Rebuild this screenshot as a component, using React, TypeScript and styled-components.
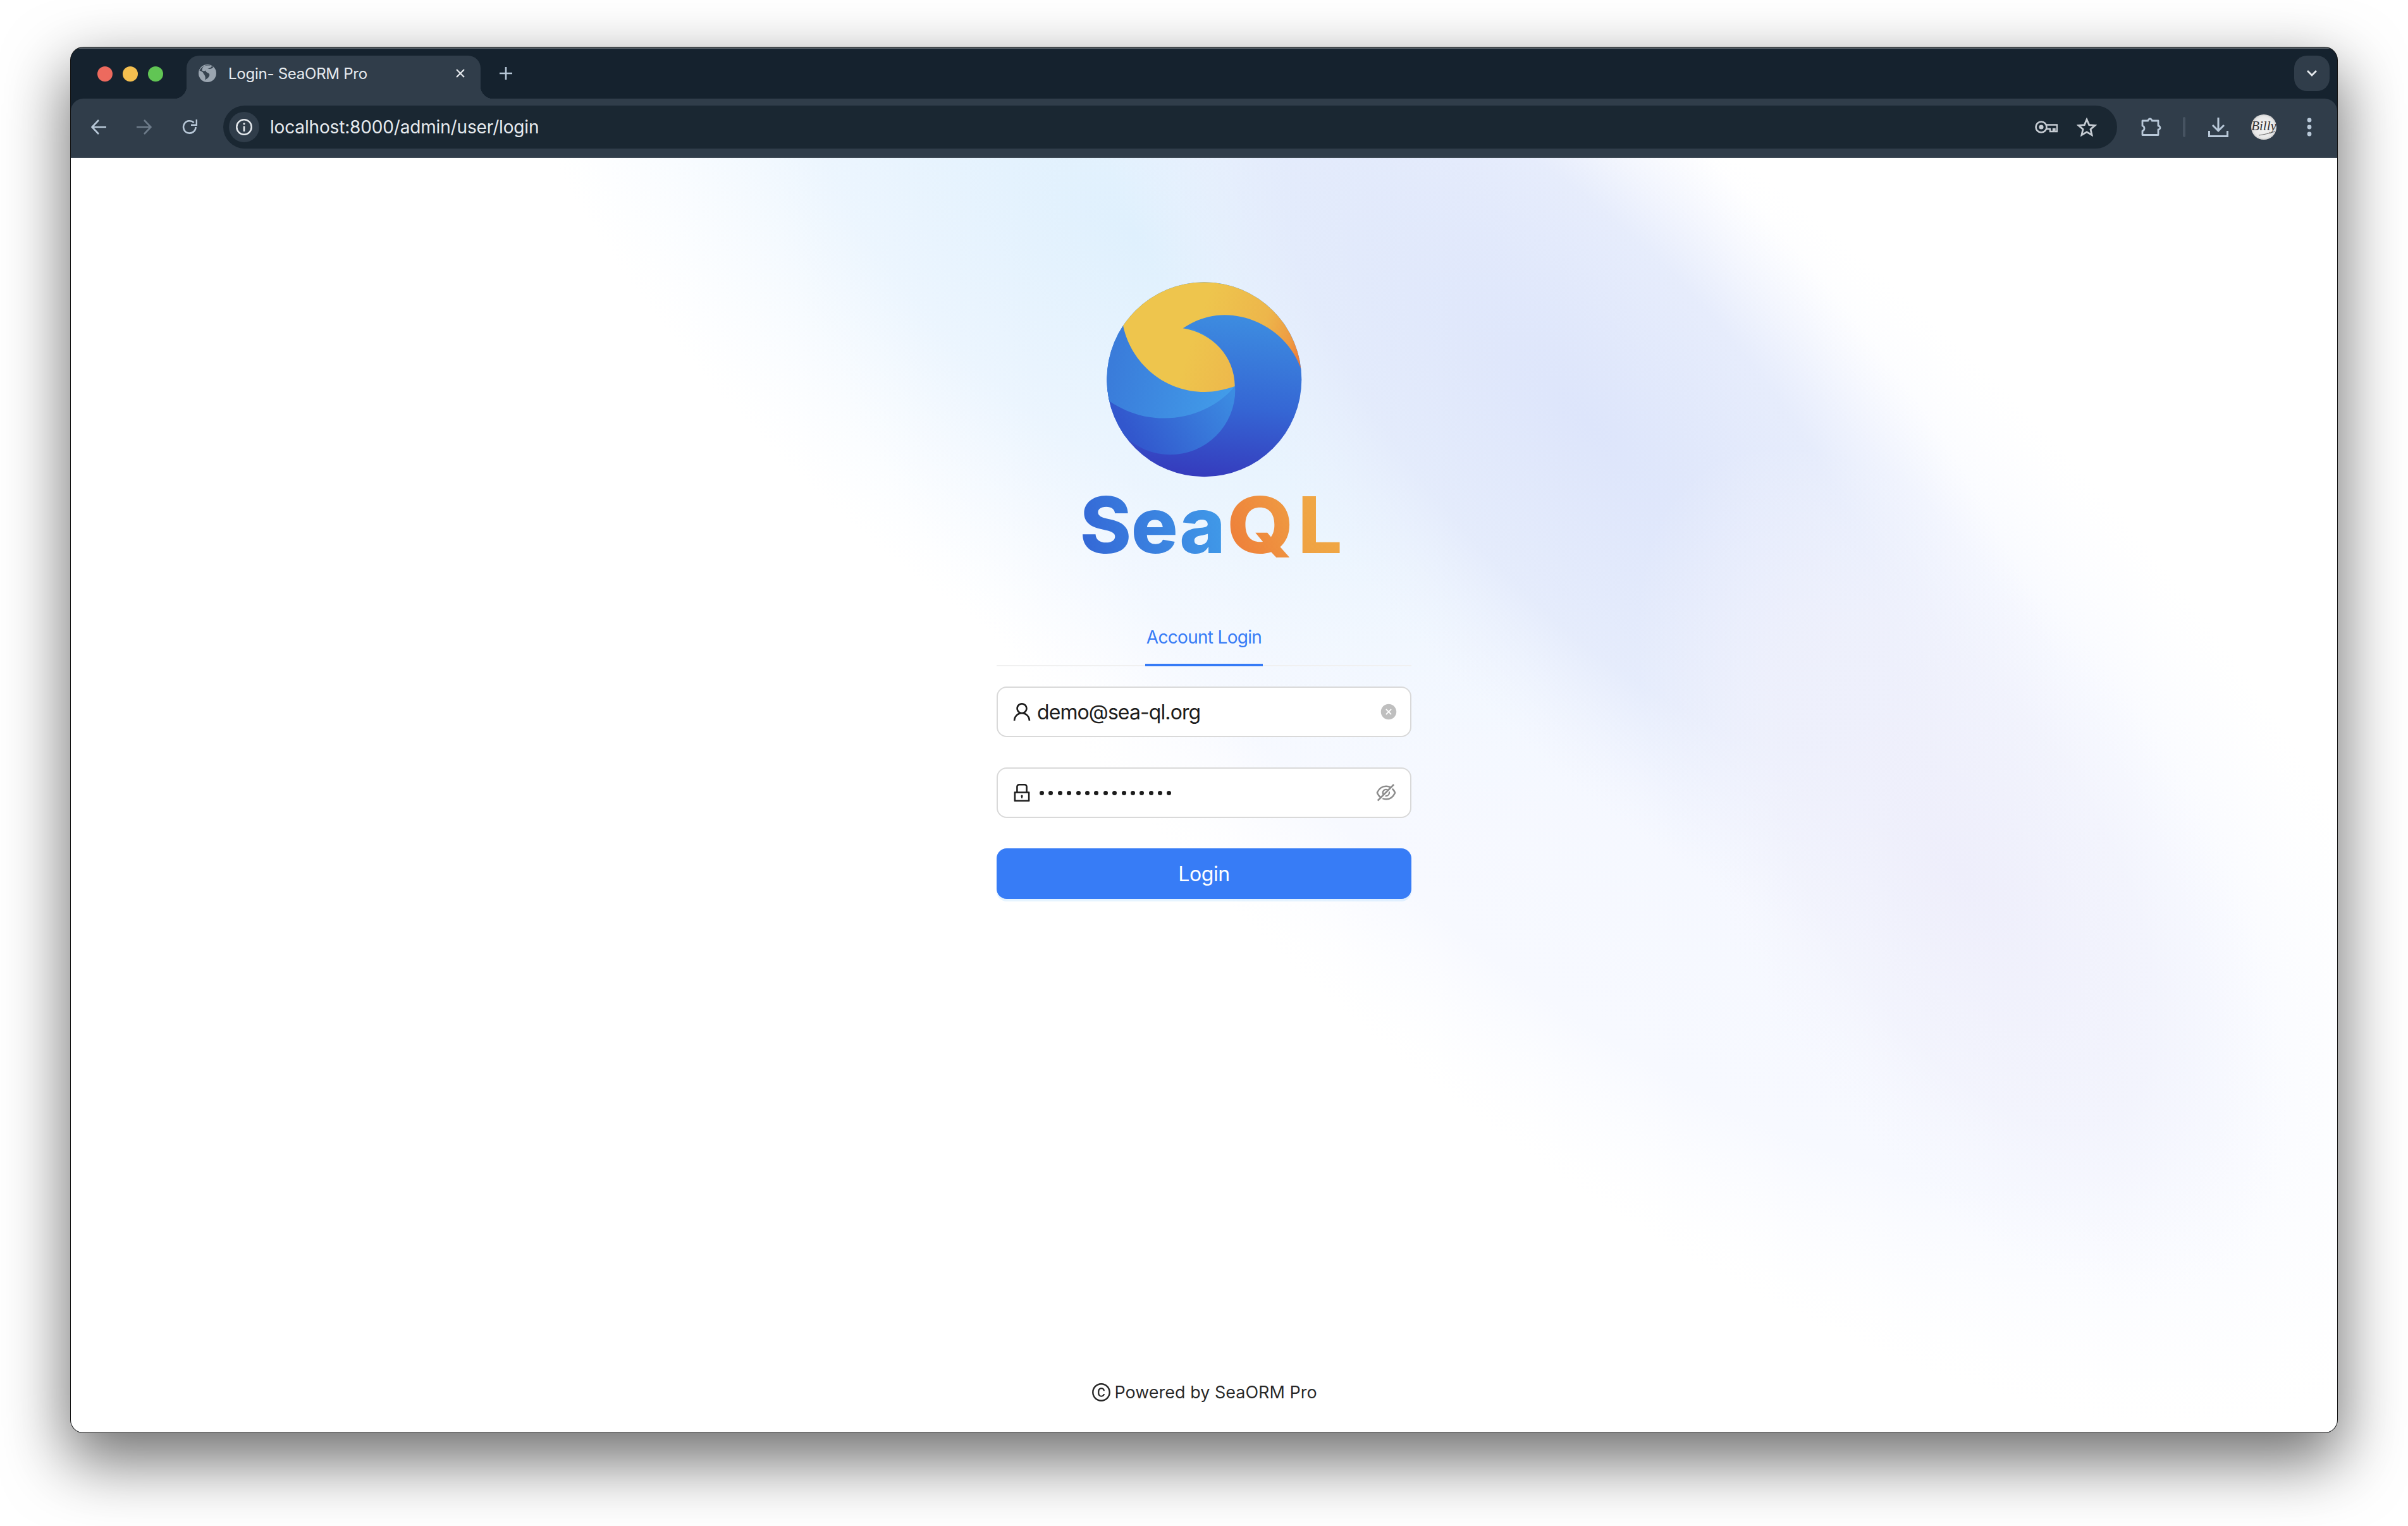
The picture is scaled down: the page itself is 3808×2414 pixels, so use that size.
import React from "react";
import styled, { createGlobalStyle } from "styled-components";
import { AiOutlineUser, AiOutlineLock, AiOutlineEyeInvisible, AiFillCloseCircle, AiOutlineCopyright } from "react-icons/ai";

const Global = createGlobalStyle`
  html, body { margin: 0; padding: 0; background: #fff; }
  #root { width: 3808px; height: 2414px; overflow: hidden; }
  * { box-sizing: border-box; }
`;

const Screen = styled.div`
  width: 3808px;
  height: 2414px;
  padding: 75px 112px 148px 112px;
  font-family: Inter, "Liberation Sans", sans-serif;
`;

const BrowserWindow = styled.div`
  width: 3584px;
  height: 2191px;
  display: flex;
  flex-direction: column;
  border-radius: 20px;
  overflow: hidden;
  background: #15222e;
  box-shadow: 0 0 0 1px #111, 0 40px 100px 6px rgba(0, 0, 0, 0.56);
`;

const TabStrip = styled.div`
  height: 81px;
  flex: none;
  display: flex;
  align-items: flex-start;
  padding: 11px 12px 0 42px;
  border-top: 2px solid #5f686f;
`;

const Lights = styled.div`
  display: flex;
  gap: 16px;
  margin-top: 17px;
`;

const Light = styled.span<{ $color: string }>`
  width: 24px;
  height: 24px;
  border-radius: 50%;
  background: ${(p) => p.$color};
`;

const Tab = styled.div`
  position: relative;
  width: 465px;
  height: 68px;
  margin-left: 37px;
  padding: 0 24px 12px 19px;
  display: flex;
  align-items: center;
  gap: 19px;
  background: #303d4a;
  border-radius: 20px 20px 0 0;
  color: #e6eaee;
  font-size: 24px;
  &::before, &::after {
    content: "";
    position: absolute;
    bottom: 0;
    width: 20px;
    height: 20px;
  }
  &::before {
    left: -20px;
    background: radial-gradient(circle at 0 0, transparent 20px, #303d4a 20.5px);
  }
  &::after {
    right: -20px;
    background: radial-gradient(circle at 100% 0, transparent 20px, #303d4a 20.5px);
  }
`;

const TabTitle = styled.span`
  flex: 1;
  letter-spacing: -0.25px;
  white-space: nowrap;
`;

const NewTab = styled.svg`
  width: 24px;
  height: 24px;
  margin: 16px 0 0 28px;
`;

const ExpandButton = styled.div`
  width: 56px;
  height: 56px;
  margin-left: auto;
  border-radius: 20px;
  background: #303d4a;
  display: flex;
  align-items: center;
  justify-content: center;
`;

const Toolbar = styled.div`
  height: 94px;
  flex: none;
  display: flex;
  align-items: center;
  padding: 0 0 2px 32px;
  background: #303d4a;
  border-bottom: 2px solid #3d4955;
  border-radius: 20px 20px 0 0;
`;

const ToolIcon = styled.svg<{ $w?: number; $h?: number; $ml?: number }>`
  width: ${(p) => p.$w ?? 32}px;
  height: ${(p) => p.$h ?? 32}px;
  margin-left: ${(p) => p.$ml ?? 0}px;
  flex: none;
`;

const Omnibox = styled.div`
  width: 2995px;
  height: 68px;
  margin-left: 41px;
  padding: 0 32px 0 9px;
  display: flex;
  align-items: center;
  border-radius: 34px;
  background: #1a2732;
  flex: none;
`;

const InfoChip = styled.div`
  width: 48px;
  height: 48px;
  border-radius: 50%;
  background: #303d4a;
  display: flex;
  align-items: center;
  justify-content: center;
  flex: none;
`;

const Url = styled.span`
  flex: 1;
  margin-left: 17px;
  color: #e6eaee;
  font-size: 28px;
  letter-spacing: -0.16px;
  white-space: nowrap;
`;

const Separator = styled.span`
  width: 4px;
  height: 32px;
  margin-left: 34px;
  border-radius: 2px;
  background: #465361;
  flex: none;
`;

const Page = styled.main`
  position: relative;
  flex: 1;
  display: flex;
  flex-direction: column;
  align-items: center;
  overflow: hidden;
  background: #fff;
  padding-top: 170px;
`;

const Wash = styled.svg`
  position: absolute;
  inset: 0;
  width: 100%;
  height: 100%;
`;

const Logo = styled.svg`
  position: relative;
  width: 500px;
  height: 480px;
  margin-left: 12px;
  flex: none;
  overflow: visible;
`;

const LogoLetters = styled.text`
  font-family: Inter, "Liberation Sans", sans-serif;
  font-weight: 800;
  font-size: 370px;
`;

const Form = styled.div`
  position: relative;
  width: 656px;
  margin-top: 86px;
  display: flex;
  flex-direction: column;
`;

const Tabs = styled.div`
  display: flex;
  justify-content: center;
  border-bottom: 2px solid #f0f0f0;
`;

const TabLabel = styled.div`
  margin-bottom: -2px;
  padding-bottom: 20px;
  border-bottom: 4px solid #367bf6;
  color: #367bf6;
  font-size: 28px;
  line-height: 44px;
  letter-spacing: -0.7px;
  width: 186px;
  text-align: center;
  white-space: nowrap;
`;

const Field = styled.div<{ $top: number }>`
  height: 80px;
  margin-top: ${(p) => p.$top}px;
  padding: 0 20px 0 22px;
  display: flex;
  align-items: center;
  border: 2px solid #d9d9d9;
  border-radius: 16px;
  background: #fff;
  color: #1c1c1c;
  font-size: 32px;
  & > svg:first-child { font-size: 36px; flex: none; margin-left: -2px; }
`;

const FieldValue = styled.span`
  flex: 1;
  margin-left: 6px;
  letter-spacing: -0.9px;
  white-space: nowrap;
`;

const Dots = styled.span`
  flex: 1;
  margin-left: 10px;
  display: flex;
  gap: 7.4px;
`;

const Dot = styled.i`
  width: 7px;
  height: 7px;
  border-radius: 50%;
  background: #1c1c1c;
`;

const LoginButton = styled.div`
  height: 80px;
  margin-top: 48px;
  border-radius: 16px;
  background: #377cf6;
  box-shadow: 0 4px 0 rgba(5, 145, 255, 0.1);
  color: #fff;
  font-size: 32px;
  letter-spacing: -0.4px;
  display: flex;
  align-items: center;
  justify-content: center;
`;

const Footer = styled.div`
  position: relative;
  margin-top: auto;
  padding-bottom: 41px;
  display: flex;
  align-items: center;
  gap: 4px;
  font-size: 27px;
  line-height: 44px;
  color: rgba(0, 0, 0, 0.85);
  & > svg { font-size: 33px; margin-top: -2px; }
`;

const ic = "#b8c8d8";

export default function App() {
  return (
    <>
      <Global />
      <Screen>
        <BrowserWindow>
          <TabStrip>
            <Lights>
              <Light $color="#ed6a5e" />
              <Light $color="#f4bf4f" />
              <Light $color="#61c554" />
            </Lights>
            <Tab>
              <ToolIcon viewBox="0 0 28 28" $w={28} $h={28}>
                <circle cx="14" cy="14" r="14" fill="#9aa5b0" />
                <path d="M10 2c5-2 9-1 13 1-2 3-4 4-7 4-3 0-5 1-5 3 0 2 2 3 5 4 3 1 3 4 1 7-1 2-3 3-5 5 1-3 0-5-1-7-1-2-3-3-4-5-2-1-4-2-6-2C2 9 5 4 10 2z" fill="#303d4a" opacity="0.95" transform="rotate(8 14 14) scale(.96)" />
                <path d="M8 3 C12 1 18 1 21 3 C19 6 15 6 13 8 C11 10 9 11 6 10 C5 8 6 5 8 3z" fill="#9aa5b0" />
              </ToolIcon>
              <TabTitle>Login- SeaORM Pro</TabTitle>
              <ToolIcon viewBox="0 0 16 16" $w={16} $h={16}>
                <path d="M2 2l12 12M14 2L2 14" stroke="#e6eaee" strokeWidth="2.2" />
              </ToolIcon>
            </Tab>
            <NewTab viewBox="0 0 24 24">
              <path d="M12 2v20M2 12h20" stroke={ic} strokeWidth="2.6" />
            </NewTab>
            <ExpandButton>
              <ToolIcon viewBox="0 0 18 12" $w={18} $h={12}>
                <path d="M2 2l7 7 7-7" fill="none" stroke="#e6eaee" strokeWidth="2.8" />
              </ToolIcon>
            </ExpandButton>
          </TabStrip>

          <Toolbar>
            <ToolIcon viewBox="0 0 24 24" $w={24} $h={24}>
              <path d="M12 1L1.5 12 12 23M2 12h22" fill="none" stroke={ic} strokeWidth="2.6" />
            </ToolIcon>
            <ToolIcon viewBox="0 0 24 24" $w={24} $h={24} $ml={48} style={{ opacity: 0.45 }}>
              <path d="M12 1l10.5 11L12 23M22 12H0" fill="none" stroke={ic} strokeWidth="2.6" />
            </ToolIcon>
            <ToolIcon viewBox="0 0 24 24" $w={24} $h={24} $ml={48}>
              <path d="M21.5 12A9.7 9.7 0 1 1 18.6 5" fill="none" stroke={ic} strokeWidth="2.6" />
              <path d="M24 0v10H14V7.6h7.6V0z" fill={ic} />
            </ToolIcon>
            <Omnibox>
              <InfoChip>
                <ToolIcon viewBox="0 0 26 26" $w={26} $h={26}>
                  <circle cx="13" cy="13" r="11.7" fill="none" stroke="#e6eaee" strokeWidth="2.5" />
                  <path d="M13 11.5V20" stroke="#e6eaee" strokeWidth="2.6" />
                  <circle cx="13" cy="7.8" r="1.6" fill="#e6eaee" />
                </ToolIcon>
              </InfoChip>
              <Url>localhost:8000/admin/user/login</Url>
              <ToolIcon viewBox="0 0 36 20" $w={36} $h={20}>
                <circle cx="10" cy="10" r="8.5" fill="none" stroke="#c6ccd3" strokeWidth="2.6" />
                <circle cx="10" cy="10" r="3.6" fill="#c6ccd3" />
                <path d="M18 6.5h17v10.5h-3.5v-4H29v4h-5v-4h-6" fill="none" stroke="#c6ccd3" strokeWidth="2.4" />
              </ToolIcon>
              <ToolIcon viewBox="0 0 32 30" $w={32} $h={30} $ml={30}>
                <path d="M16 3l3.7 8.6 9.3.8-7 6.1 2.1 9.1-8.1-4.8-8.1 4.8 2.1-9.1-7-6.1 9.3-.8z" fill="none" stroke="#c6ccd3" strokeWidth="2.8" />
              </ToolIcon>
            </Omnibox>
            <ToolIcon viewBox="0 0 32 34" $w={32} $h={34} $ml={38}>
              <path d="M2 7h9a3 3 0 0 1 6 0h10v8a3 3 0 0 1 0 6v8.5H2V23c4-1 4-7 0-8z" fill="none" stroke={ic} strokeWidth="2.8" strokeLinejoin="round" />
            </ToolIcon>
            <Separator />
            <ToolIcon viewBox="0 0 32 32" $w={32} $h={32} $ml={36}>
              <path d="M16 1v20M7 13l9 9 9-9" fill="none" stroke={ic} strokeWidth="3" />
              <path d="M1.5 22v8.5h29V22" fill="none" stroke={ic} strokeWidth="3" />
            </ToolIcon>
            <ToolIcon viewBox="0 0 40 40" $w={40} $h={40} $ml={36}>
              <defs>
                <radialGradient id="av" cx="50%" cy="50%" r="55%">
                  <stop offset="0" stopColor="#f6f6f6" />
                  <stop offset="0.75" stopColor="#e8e8e8" />
                  <stop offset="1" stopColor="#c4c4c4" />
                </radialGradient>
              </defs>
              <circle cx="20" cy="20" r="20" fill="url(#av)" />
              <text x="20" y="25" textAnchor="middle" fontFamily="Liberation Serif, serif" fontStyle="italic" fontSize="21" fill="#333">Billy</text>
              <path d="M12 33c8-1 16-3 26-6" fill="none" stroke="#555" strokeWidth="0.9" />
            </ToolIcon>
            <ToolIcon viewBox="0 0 8 30" $w={8} $h={30} $ml={48}>
              <circle cx="4" cy="4" r="3.4" fill={ic} />
              <circle cx="4" cy="15" r="3.4" fill={ic} />
              <circle cx="4" cy="26" r="3.4" fill={ic} />
            </ToolIcon>
          </Toolbar>

          <Page>
            <Wash viewBox="0 0 3584 2016" preserveAspectRatio="none">
              <defs>
                <radialGradient id="w1"><stop offset="0" stopColor="#f4f7ff" /><stop offset="0.7" stopColor="#f7f9ff" /><stop offset="1" stopColor="#fbfcff" stopOpacity="0" /></radialGradient>
                <radialGradient id="w2"><stop offset="0" stopColor="#dff0fd" /><stop offset="0.5" stopColor="#e9f4fe" stopOpacity="0.85" /><stop offset="1" stopColor="#f3f9ff" stopOpacity="0" /></radialGradient>
                <radialGradient id="w3"><stop offset="0" stopColor="#dde5fb" /><stop offset="0.6" stopColor="#e2e9fb" stopOpacity="0.8" /><stop offset="1" stopColor="#ecf0fd" stopOpacity="0" /></radialGradient>
                <radialGradient id="w4"><stop offset="0" stopColor="#eeeefb" /><stop offset="0.6" stopColor="#f1f2fc" stopOpacity="0.7" /><stop offset="1" stopColor="#f6f7fe" stopOpacity="0" /></radialGradient>
              </defs>
              <ellipse cx="2430" cy="760" rx="1680" ry="720" fill="url(#w1)" transform="rotate(42 2430 760)" />
              <ellipse cx="1680" cy="120" rx="1250" ry="640" fill="url(#w2)" transform="rotate(40 1680 120)" />
              <ellipse cx="2400" cy="420" rx="1100" ry="430" fill="url(#w3)" transform="rotate(48 2400 420)" />
              <ellipse cx="2990" cy="1130" rx="760" ry="380" fill="url(#w4)" transform="rotate(58 2990 1130)" />
            </Wash>

            <Logo viewBox="0 0 1500 1440">
              <defs>
                <clipPath id="disc"><circle cx="733" cy="541" r="462" /></clipPath>
                <linearGradient id="deep" gradientUnits="userSpaceOnUse" x1="800" y1="235" x2="720" y2="1003">
                  <stop offset="0" stopColor="#3d8ce0" />
                  <stop offset="0.55" stopColor="#3566d4" />
                  <stop offset="1" stopColor="#353bbd" />
                </linearGradient>
                <linearGradient id="mid" gradientUnits="userSpaceOnUse" x1="420" y1="860" x2="860" y2="580">
                  <stop offset="0" stopColor="#3257cd" />
                  <stop offset="1" stopColor="#3c8de2" />
                </linearGradient>
                <linearGradient id="light" gradientUnits="userSpaceOnUse" x1="290" y1="500" x2="850" y2="620">
                  <stop offset="0" stopColor="#3a7cda" />
                  <stop offset="1" stopColor="#429ce9" />
                </linearGradient>
                <linearGradient id="sun" gradientUnits="userSpaceOnUse" x1="680" y1="340" x2="1190" y2="520">
                  <stop offset="0" stopColor="#eec54d" />
                  <stop offset="0.55" stopColor="#edb64b" />
                  <stop offset="0.82" stopColor="#ee9a42" />
                  <stop offset="1" stopColor="#ee6f32" />
                </linearGradient>
                <linearGradient id="sea" gradientUnits="userSpaceOnUse" x1="155" y1="1300" x2="815" y2="1200">
                  <stop offset="0" stopColor="#3468d6" />
                  <stop offset="1" stopColor="#4099e8" />
                </linearGradient>
                <linearGradient id="qGrad" gradientUnits="userSpaceOnUse" x1="10" y1="-40" x2="300" y2="-160">
                  <stop offset="0" stopColor="#ee7f3a" />
                  <stop offset="1" stopColor="#ef9a42" />
                </linearGradient>
                <linearGradient id="lGrad" gradientUnits="userSpaceOnUse" x1="1178" y1="1320" x2="1383" y2="1200">
                  <stop offset="0" stopColor="#efa243" />
                  <stop offset="1" stopColor="#f0a845" />
                </linearGradient>
              </defs>
              <g clipPath="url(#disc)">
                <rect x="260" y="70" width="950" height="950" fill="url(#deep)" />
                <circle cx="572" cy="590" r="308" fill="url(#mid)" />
                <path d="M348 285L878 573C760 720 500 790 285 645L200 600L200 400Z" fill="url(#light)" />
                <path d="M348 285A462 462 0 0 1 1192 490C1130 320 970 235 830 235C760 235 690 258 632 298C770 320 878 430 878 573C830 590 780 600 735 600C540 600 385 460 348 285Z" fill="url(#sun)" />
              </g>
              <LogoLetters x="143 386 616" y="1365" fill="url(#sea)">Sea</LogoLetters>
              <LogoLetters x="0" y="0" transform="translate(841 1365) scale(1.095 1)" fill="url(#qGrad)">Q</LogoLetters>
              <LogoLetters x="1178" y="1365" fill="url(#lGrad)">L</LogoLetters>
            </Logo>

            <Form>
              <Tabs>
                <TabLabel>Account Login</TabLabel>
              </Tabs>
              <Field $top={32}>
                <AiOutlineUser />
                <FieldValue>demo@sea-ql.org</FieldValue>
                <AiFillCloseCircle color="#bfbfbf" size={28} />
              </Field>
              <Field $top={48}>
                <AiOutlineLock />
                <Dots>
                  {Array.from({ length: 15 }, (_, i) => (
                    <Dot key={i} />
                  ))}
                </Dots>
                <AiOutlineEyeInvisible color="#8c8c8c" size={36} />
              </Field>
              <LoginButton>Login</LoginButton>
            </Form>

            <Footer>
              <AiOutlineCopyright />
              Powered by SeaORM Pro
            </Footer>
          </Page>
        </BrowserWindow>
      </Screen>
    </>
  );
}
